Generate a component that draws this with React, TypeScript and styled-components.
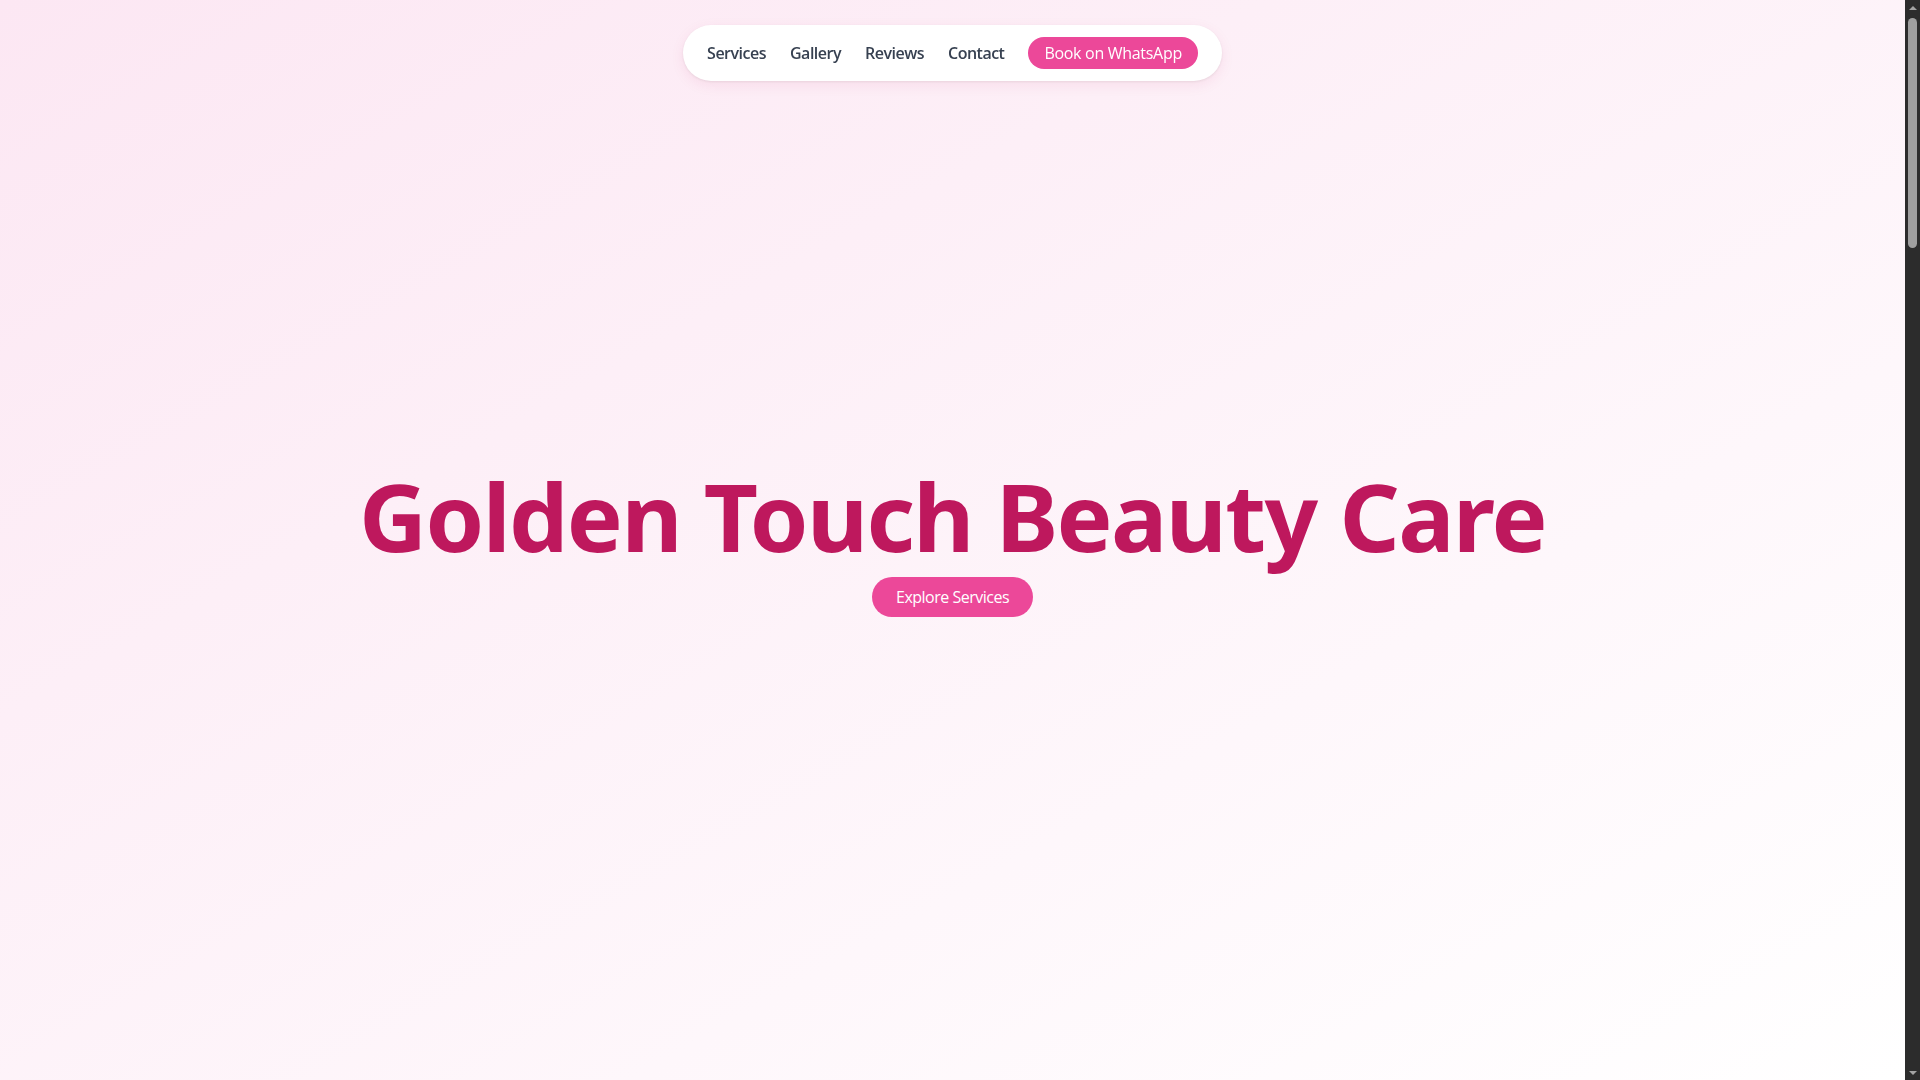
import React from "react";
import styled, { createGlobalStyle } from "styled-components";

const GlobalStyle = createGlobalStyle`
  * {
    box-sizing: border-box;
  }

  html,
  body {
    height: 100%;
    overflow: hidden;
  }

  body {
    margin: 0;
    font-family: "Open Sans", "Noto Sans", "Liberation Sans", sans-serif;
    color: #374151;
    background: #ffffff;
  }
`;

const Frame = styled.div`
  display: flex;
  height: 100vh;
`;

const Page = styled.main`
  flex: 1;
  min-width: 0;
  height: 100%;
  overflow-y: auto;
  scrollbar-width: none;

  &::-webkit-scrollbar {
    display: none;
  }
`;

/* the browser's scrollbar, as seen in the screenshot */
const Rail = styled.div`
  width: 15px;
  flex-shrink: 0;
  display: flex;
  flex-direction: column;
  align-items: center;
  background: #2c2c2c;
`;

const RailArrow = styled.div<{ $down?: boolean }>`
  height: 15px;
  display: flex;
  align-items: center;
  justify-content: center;

  &::before {
    content: "";
    border-left: 4px solid transparent;
    border-right: 4px solid transparent;
    ${(props) =>
      props.$down
        ? "border-top: 4px solid #a3a3a3;"
        : "border-bottom: 4px solid #a3a3a3;"}
  }
`;

const RailTrack = styled.div`
  flex: 1;
  width: 100%;
  display: flex;
  justify-content: center;
`;

const RailThumb = styled.div`
  width: 9px;
  height: 230px;
  margin-top: 3px;
  border-radius: 5px;
  background: #9f9f9f;
`;

const NavDock = styled.div`
  position: sticky;
  top: 0;
  height: 0;
  z-index: 10;
  display: flex;
  justify-content: center;
`;

const NavBar = styled.nav`
  margin-top: 25px;
  height: 56px;
  display: flex;
  align-items: center;
  gap: 24px;
  padding: 12px 24px;
  background: #ffffff;
  border-radius: 9999px;
  box-shadow: 0 4px 14px rgba(190, 24, 93, 0.08), 0 1px 3px rgba(0, 0, 0, 0.08);
`;

const NavLink = styled.a`
  font-size: 16px;
  font-weight: 600;
  letter-spacing: -0.5px;
  color: #374151;
  text-decoration: none;
  line-height: 24px;
  cursor: pointer;

  &:hover {
    color: #be185d;
  }
`;

const PillButton = styled.a<{ $size?: "sm" | "md" }>`
  display: inline-block;
  background: #ec4899;
  color: #ffffff;
  font-size: 16px;
  letter-spacing: ${(props) => (props.$size === "sm" ? "-0.3px" : "-0.5px")};
  line-height: 24px;
  text-decoration: none;
  border-radius: 9999px;
  padding: ${(props) => (props.$size === "sm" ? "4px 16px" : "8px 24px")};
  cursor: pointer;

  &:hover {
    background: #db2777;
  }
`;

const Hero = styled.header`
  min-height: 100vh;
  display: flex;
  flex-direction: column;
  align-items: center;
  justify-content: center;
  padding-top: 6px;
  background: linear-gradient(to bottom right, #fce7f3, #ffffff);
`;

const Title = styled.h1`
  margin: 0 0 14px;
  font-family: "Noto Sans", "Open Sans", "Liberation Sans", sans-serif;
  font-size: 94px;
  letter-spacing: -1.6px;
  line-height: 1;
  font-weight: 700;
  color: #be185d;
  text-align: center;
`;

const Section = styled.section<{ $tint?: boolean }>`
  min-height: ${(props) => (props.$tint ? "900px" : "1000px")};
  padding: 96px 48px;
  background: ${(props) => (props.$tint ? "#fdf2f8" : "#ffffff")};
  display: flex;
  flex-direction: column;
  align-items: center;
  gap: 40px;
`;

const SectionTitle = styled.h2`
  margin: 0;
  font-size: 40px;
  font-weight: 700;
  color: #be185d;
`;

const CardGrid = styled.div`
  width: 100%;
  max-width: 1100px;
  display: grid;
  grid-template-columns: repeat(3, 1fr);
  gap: 24px;
`;

const Card = styled.div`
  background: #ffffff;
  border-radius: 16px;
  padding: 28px;
  box-shadow: 0 4px 14px rgba(190, 24, 93, 0.08);
`;

const CardTitle = styled.h3`
  margin: 0 0 8px;
  font-size: 20px;
  color: #be185d;
`;

const CardText = styled.p`
  margin: 0;
  font-size: 15px;
  line-height: 1.6;
  color: #4b5563;
`;

const Photo = styled.div`
  aspect-ratio: 4 / 3;
  border-radius: 16px;
  background: linear-gradient(135deg, #fbcfe8, #fdf2f8);
`;

const Footer = styled.footer`
  padding: 40px;
  text-align: center;
  font-size: 14px;
  color: #6b7280;
  background: #fdf2f8;
`;

const services = [
  { name: "Hair Styling", text: "Cuts, blow-dry and styling for every occasion." },
  { name: "Bridal Makeup", text: "Elegant looks for your most special day." },
  { name: "Facials", text: "Refreshing skin treatments for a natural glow." },
  { name: "Manicure & Pedicure", text: "Neat, polished nails and relaxing care." },
  { name: "Threading & Waxing", text: "Gentle, precise hair removal." },
  { name: "Mehndi", text: "Beautiful henna designs for festivities." },
];

const reviews = [
  { name: "Ayesha", text: "Lovely staff and amazing results. Highly recommended!" },
  { name: "Sana", text: "My bridal makeup was perfect. Thank you so much!" },
  { name: "Hina", text: "Clean salon, friendly service and fair prices." },
];

export default function App() {
  return (
    <>
      <GlobalStyle />
      <Frame>
        <Page>
          <NavDock>
            <NavBar>
              <NavLink href="#services">Services</NavLink>
              <NavLink href="#gallery">Gallery</NavLink>
              <NavLink href="#reviews">Reviews</NavLink>
              <NavLink href="#contact">Contact</NavLink>
              <PillButton $size="sm">Book on WhatsApp</PillButton>
            </NavBar>
          </NavDock>

          <Hero>
            <Title>Golden Touch Beauty Care</Title>
            <PillButton href="#services">Explore Services</PillButton>
          </Hero>

          <Section id="services">
            <SectionTitle>Our Services</SectionTitle>
            <CardGrid>
              {services.map((s) => (
                <Card key={s.name}>
                  <CardTitle>{s.name}</CardTitle>
                  <CardText>{s.text}</CardText>
                </Card>
              ))}
            </CardGrid>
          </Section>

          <Section id="gallery" $tint>
            <SectionTitle>Gallery</SectionTitle>
            <CardGrid>
              {[1, 2, 3, 4, 5, 6].map((n) => (
                <Photo key={n} />
              ))}
            </CardGrid>
          </Section>

          <Section id="reviews">
            <SectionTitle>Reviews</SectionTitle>
            <CardGrid>
              {reviews.map((r) => (
                <Card key={r.name}>
                  <CardTitle>{r.name}</CardTitle>
                  <CardText>{r.text}</CardText>
                </Card>
              ))}
            </CardGrid>
          </Section>

          <Section id="contact" $tint>
            <SectionTitle>Contact</SectionTitle>
            <CardText>Open daily 10am – 8pm. Message us to book your appointment.</CardText>
            <PillButton>Book on WhatsApp</PillButton>
          </Section>

          <Footer>© Golden Touch Beauty Care</Footer>
        </Page>

        <Rail>
          <RailArrow />
          <RailTrack>
            <RailThumb />
          </RailTrack>
          <RailArrow $down />
        </Rail>
      </Frame>
    </>
  );
}
